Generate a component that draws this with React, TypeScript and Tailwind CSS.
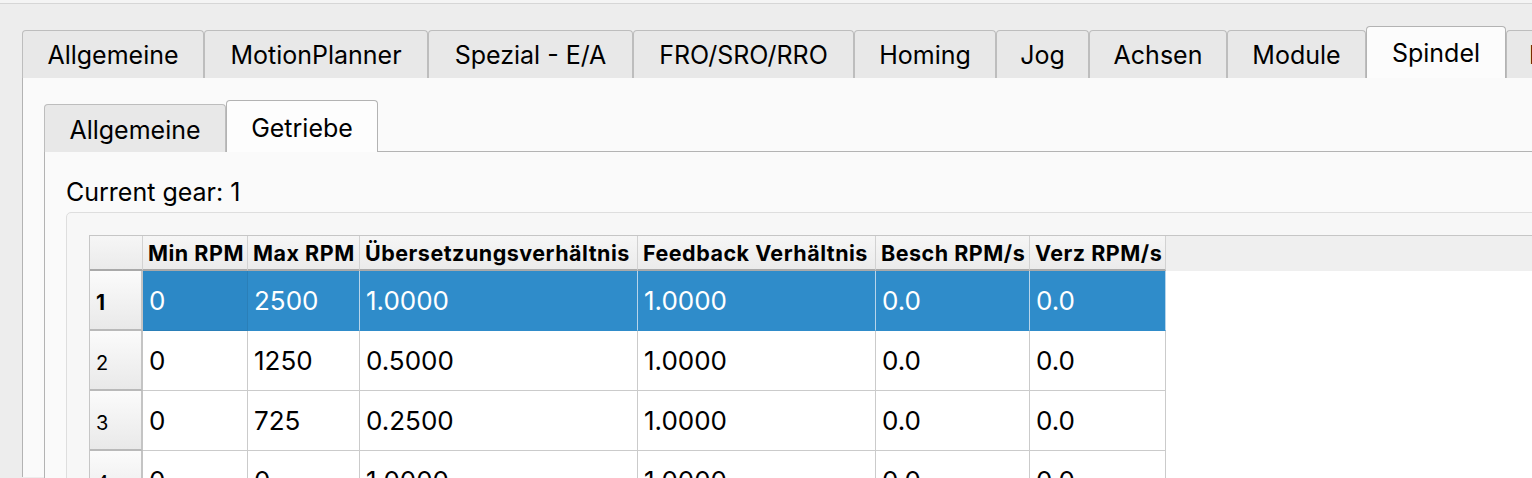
import React from 'react';

const topTabs = [
  {label: 'Allgemeine', w: 182},
  {label: 'MotionPlanner', w: 224},
  {label: 'Spezial - E/A', w: 205},
  {label: 'FRO/SRO/RRO', w: 221},
  {label: 'Homing', w: 142},
  {label: 'Jog', w: 93},
  {label: 'Achsen', w: 138},
  {label: 'Module', w: 139},
  {label: 'Spindel', w: 140, active: true},
];

const columns = [
  {label: 'Min RPM', w: 105},
  {label: 'Max RPM', w: 112},
  {label: 'Übersetzungsverhältnis', w: 278},
  {label: 'Feedback Verhältnis', w: 238},
  {label: 'Besch RPM/s', w: 154},
  {label: 'Verz RPM/s', w: 136},
];

const rows = [
  ['0', '2500', '1.0000', '1.0000', '0.0', '0.0'],
  ['0', '1250', '0.5000', '1.0000', '0.0', '0.0'],
  ['0', '725', '0.2500', '1.0000', '0.0', '0.0'],
  ['0', '0', '1.0000', '1.0000', '0.0', '0.0'],
];

function Tab({label, w, active}: {label: string; w: number; active?: boolean}) {
  return (
    <div
      style={{width: w}}
      className={
        active
          ? 'relative z-10 flex h-[52px] shrink-0 items-center justify-center rounded-t-[4px] border border-b-0 border-[#b3b3b3] bg-[#fcfcfc] pt-[2px] text-[25px] text-black'
          : 'flex h-[48px] shrink-0 items-center justify-center rounded-t-[4px] border border-b-0 border-[#bdbdbd] bg-[#e8e8e8] pt-[2px] text-[25px] text-black'
      }
    >
      <span className="whitespace-nowrap">{label}</span>
    </div>
  );
}

export default function App() {
  return (
    <div
      className="h-[478px] w-[1532px] overflow-hidden bg-[#ededed]"
      style={{fontFamily: 'Inter, "Liberation Sans", sans-serif'}}
    >
      <div className="h-[4px] border-b border-[#d6d6d6] bg-[#f4f4f4]" />
      <div className="pl-[22px] pt-[22px]">
        {/* top tab bar */}
        <div className="flex items-end">
          {topTabs.map((t) => (
            <Tab key={t.label} {...t} />
          ))}
          <div className="flex h-[48px] w-[40px] shrink-0 items-center overflow-hidden rounded-tl-[4px] border-l border-t border-[#bdbdbd] bg-[#e8e8e8] pl-[22px] pt-[2px] text-[25px] text-black">
            <span className="whitespace-nowrap">I</span>
          </div>
        </div>
        {/* outer panel */}
        <div className="-mt-px h-[400px] border-l border-t border-[#b3b3b3] bg-[#fafafa] pl-[21px] pt-[22px]">
          <div className="flex items-end">
            <div className="flex h-[48px] w-[182px] shrink-0 items-center justify-center rounded-t-[4px] border border-b-0 border-[#bdbdbd] bg-[#e8e8e8] pt-[4px] text-[25px] text-black">
              Allgemeine
            </div>
            <div className="relative z-10 flex h-[52px] w-[152px] shrink-0 items-center justify-center rounded-t-[4px] border border-b-0 border-[#b3b3b3] bg-[#fdfdfd] pt-[4px] text-[25px] text-black">
              Getriebe
            </div>
          </div>
          {/* inner panel */}
          <div className="-mt-px h-[340px] border-l border-t border-[#b3b3b3] bg-[#fafafa] pl-[21px] pt-[22px]">
            <div className="h-[38px] text-[25px] leading-[36px] text-black">Current gear: 1</div>
            <div className="h-[300px] w-[1500px] rounded-t-[5px] border border-[#dedede] bg-[#f7f7f7] pl-[22px] pt-[22px]">
              <div className="h-[260px] border-l border-t border-[#c6c6c6] bg-white">
                {/* header */}
                <div className="flex h-[35px] bg-[#efefef]">
                  <div className="h-[35px] w-[53px] shrink-0 border-b-2 border-r border-b-[#a9a9a9] border-r-[#d2d2d2] bg-gradient-to-b from-[#f6f6f6] to-[#ebebeb]" />
                  {columns.map((c) => (
                    <div
                      key={c.label}
                      style={{width: c.w}}
                      className="flex h-[35px] shrink-0 items-center overflow-hidden border-b-2 border-r border-b-[#a9a9a9] border-r-[#d2d2d2] bg-gradient-to-b from-[#f6f6f6] to-[#ebebeb] pl-[5px] pt-[2px] text-[21.5px] font-bold tracking-[0.5px] text-black"
                    >
                      <span className="whitespace-nowrap">{c.label}</span>
                    </div>
                  ))}
                </div>
                {/* body */}
                {rows.map((r, i) => {
                  const sel = i === 0;
                  return (
                    <div key={i} className="flex h-[60px]">
                      <div
                        className={
                          'flex h-[60px] w-[53px] shrink-0 items-center border-b-2 border-r-2 border-b-[#b9b9b9] border-r-[#c4c4c4] bg-gradient-to-b from-[#fbfbfb] to-[#e9e9e9] pl-[6px] pt-[6px] text-black ' +
                          (sel ? 'text-[21px] font-bold' : 'text-[20px]')
                        }
                      >
                        {i + 1}
                      </div>
                      {r.map((v, j) => (
                        <div
                          key={j}
                          style={{width: columns[j].w}}
                          className={
                            'flex h-[60px] shrink-0 items-center border-b border-r pl-[6px] text-[26px] ' +
                            (sel
                              ? j === 0
                                ? 'border-[#2a7fb8] bg-[#2c88c6] text-white'
                                : 'border-b-[#2f8cca] border-r-[#b7d4ea] bg-[#2f8cca] text-white'
                              : 'border-[#cbcbcb] text-black')
                          }
                        >
                          {v}
                        </div>
                      ))}
                    </div>
                  );
                })}
              </div>
            </div>
          </div>
        </div>
      </div>
    </div>
  );
}
